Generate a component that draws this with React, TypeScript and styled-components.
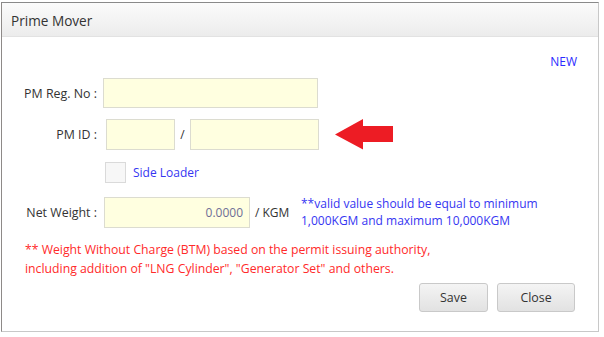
import React from "react";
import styled, { createGlobalStyle } from "styled-components";

const Global = createGlobalStyle`
  html, body { margin: 0; padding: 0; background: #ffffff; }
  body { font-family: "Open Sans", "Noto Sans", Arial, sans-serif; }
  #root { padding: 2px 0 0 1px; }
`;

const Dialog = styled.div`
  box-sizing: border-box;
  width: 598px;
  height: 330px;
  border: 1px solid #c8c8c8;
  border-top: 1px solid #8a8a8a;
  border-left: 1px solid #8e8a88;
  background: #ffffff;
  display: flex;
  flex-direction: column;
`;

const Header = styled.div`
  box-sizing: border-box;
  height: 34px;
  padding: 1px 0 0 9px;
  display: flex;
  align-items: center;
  background: linear-gradient(#fbfbfb, #ececec);
  border-bottom: 1px solid #e2e2e2;
  font-size: 13.6px;
  color: #333333;
`;

const Body = styled.div`
  flex: 1;
  display: flex;
  flex-direction: column;
  padding: 16px 21px 0 0;
  font-size: 12px;
  color: #333333;
`;

const NewLink = styled.div`
  align-self: flex-end;
  color: #2b2bff;
  font-size: 12px;
  line-height: 18px;
`;

const Row = styled.div<{ $top: number; $indent: number }>`
  display: flex;
  align-items: center;
  margin-top: ${(p) => p.$top}px;
  padding-left: ${(p) => p.$indent}px;
`;

const Label = styled.div`
  width: 95px;
  text-align: right;
  font-size: 12.4px;
`;

const Input = styled.div<{ $w: number; $h: number }>`
  box-sizing: border-box;
  width: ${(p) => p.$w}px;
  height: ${(p) => p.$h}px;
  background: #ffffe0;
  border: 1px solid #dcdcd0;
  display: flex;
  align-items: center;
  justify-content: flex-end;
  padding-right: 6px;
  color: #6e6e96;
`;

const Gap = styled.div<{ $w: number }>`
  width: ${(p) => p.$w}px;
  flex: none;
`;

const Slash = styled.span`
  width: 15px;
  text-align: center;
  color: #333;
`;

const Check = styled.div`
  box-sizing: border-box;
  width: 21px;
  height: 21px;
  background: #f7f7f7;
  border: 1px solid #dadada;
  margin-right: 7px;
`;

const Blue = styled.span`
  color: #3636f2;
`;

const Unit = styled.span`
  margin-left: 5px;
  width: 46px;
  color: #333;
`;

const Note = styled.div`
  color: #3636f2;
  line-height: 17px;
  align-self: flex-start;
  margin-top: -2px;
  margin-bottom: -3px;
`;

const Warning = styled.div`
  color: #ff2a2a;
  line-height: 19px;
  padding-left: 23px;
  margin-top: 12px;
  font-size: 12.25px;
`;

const Buttons = styled.div`
  display: flex;
  justify-content: flex-end;
  gap: 9px;
  margin-top: 5px;
  padding-right: 2px;
`;

const Button = styled.div<{ $w: number }>`
  box-sizing: border-box;
  width: ${(p) => p.$w}px;
  height: 29px;
  border: 1px solid #c9c9c9;
  border-radius: 3px;
  background: linear-gradient(#f4f4f4, #e2e2e2);
  display: flex;
  align-items: center;
  justify-content: center;
  font-size: 12.4px;
  color: #333;
`;

const Arrow = () => (
  <svg width="58" height="32" viewBox="0 0 58 32" style={{ flex: "none" }}>
    <path d="M0 16.5 L28 1 L28 8 L58 8 L58 24 L28 24 L28 31.5 Z" fill="#ed1c24" />
  </svg>
);

export default function App() {
  return (
    <>
      <Global />
      <Dialog>
        <Header>Prime Mover</Header>
        <Body>
          <NewLink>NEW</NewLink>
          <Row $top={7} $indent={0}>
            <Label>PM Reg. No :</Label>
            <Gap $w={6} />
            <Input $w={215} $h={30} />
          </Row>
          <Row $top={10} $indent={0}>
            <Label>PM ID :</Label>
            <Gap $w={9} />
            <Input $w={69} $h={31} />
            <Slash>/</Slash>
            <Input $w={129} $h={31} />
            <Gap $w={16} />
            <Arrow />
          </Row>
          <Row $top={12} $indent={103}>
            <Check />
            <Blue>Side Loader</Blue>
          </Row>
          <Row $top={14} $indent={0}>
            <Label>Net Weight :</Label>
            <Gap $w={7} />
            <Input $w={146} $h={31}>0.0000</Input>
            <Unit>/ KGM</Unit>
            <Note>
              **valid value should be equal to minimum
              <br />
              1,000KGM and maximum 10,000KGM
            </Note>
          </Row>
          <Warning>
            ** Weight Without Charge (BTM) based on the permit issuing authority,
            <br />
            including addition of "LNG Cylinder", "Generator Set" and others.
          </Warning>
          <Buttons>
            <Button $w={69}>Save</Button>
            <Button $w={78}>Close</Button>
          </Buttons>
        </Body>
      </Dialog>
    </>
  );
}
